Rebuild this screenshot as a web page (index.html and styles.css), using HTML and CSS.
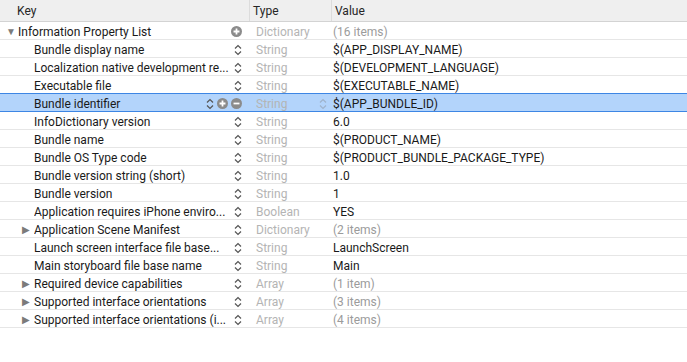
FILE: index.html
```html
<!DOCTYPE html>
<html lang="en">

<head>
    <meta charset="UTF-8">
    <meta name="viewport" content="width=device-width, initial-scale=1.0">
    <title>Info.plist</title>
    <link rel="stylesheet" href="styles.css">
</head>

<body>
    <div class="plist">
        <div class="head">
            <div class="col key-col">Key</div>
            <div class="col type-col">Type</div>
            <div class="col value-col">Value</div>
        </div>

        <div class="row">
            <div class="key root"><span class="tri">&#9660;</span><span class="name">Information Property List</span>
                <span class="ctl"><svg class="circ" viewBox="0 0 10 10"><circle cx="5" cy="5" r="5" /><path d="M5 2.3v5.4M2.3 5h5.4" /></svg></span>
            </div>
            <div class="type">Dictionary</div>
            <div class="value dim">(16 items)</div>
        </div>
        <div class="row">
            <div class="key"><span class="name">Bundle display name</span><span class="ctl"><svg class="chev" viewBox="0 0 8 12"><path d="M1 4.5l3-3 3 3M1 7.5l3 3 3-3" /></svg></span></div>
            <div class="type">String</div>
            <div class="value">$(APP_DISPLAY_NAME)</div>
        </div>
        <div class="row">
            <div class="key"><span class="name">Localization native development re...</span><span class="ctl"><svg class="chev" viewBox="0 0 8 12"><path d="M1 4.5l3-3 3 3M1 7.5l3 3 3-3" /></svg></span></div>
            <div class="type">String</div>
            <div class="value">$(DEVELOPMENT_LANGUAGE)</div>
        </div>
        <div class="row">
            <div class="key"><span class="name">Executable file</span><span class="ctl"><svg class="chev" viewBox="0 0 8 12"><path d="M1 4.5l3-3 3 3M1 7.5l3 3 3-3" /></svg></span></div>
            <div class="type">String</div>
            <div class="value">$(EXECUTABLE_NAME)</div>
        </div>
        <div class="row selected">
            <div class="key"><span class="name">Bundle identifier</span>
                <span class="ctl">
                    <svg class="chev" viewBox="0 0 8 12"><path d="M1 4.5l3-3 3 3M1 7.5l3 3 3-3" /></svg>
                    <svg class="circ" viewBox="0 0 10 10"><circle cx="5" cy="5" r="5" /><path d="M5 2.3v5.4M2.3 5h5.4" /></svg>
                    <svg class="circ" viewBox="0 0 10 10"><circle cx="5" cy="5" r="5" /><path d="M2.3 5h5.4" /></svg>
                </span>
            </div>
            <div class="type"><span class="name">String</span><svg class="chev light" viewBox="0 0 8 12"><path d="M1 4.5l3-3 3 3M1 7.5l3 3 3-3" /></svg></div>
            <div class="value">$(APP_BUNDLE_ID)</div>
        </div>
        <div class="row">
            <div class="key"><span class="name">InfoDictionary version</span><span class="ctl"><svg class="chev" viewBox="0 0 8 12"><path d="M1 4.5l3-3 3 3M1 7.5l3 3 3-3" /></svg></span></div>
            <div class="type">String</div>
            <div class="value">6.0</div>
        </div>
        <div class="row">
            <div class="key"><span class="name">Bundle name</span><span class="ctl"><svg class="chev" viewBox="0 0 8 12"><path d="M1 4.5l3-3 3 3M1 7.5l3 3 3-3" /></svg></span></div>
            <div class="type">String</div>
            <div class="value">$(PRODUCT_NAME)</div>
        </div>
        <div class="row">
            <div class="key"><span class="name">Bundle OS Type code</span><span class="ctl"><svg class="chev" viewBox="0 0 8 12"><path d="M1 4.5l3-3 3 3M1 7.5l3 3 3-3" /></svg></span></div>
            <div class="type">String</div>
            <div class="value">$(PRODUCT_BUNDLE_PACKAGE_TYPE)</div>
        </div>
        <div class="row">
            <div class="key"><span class="name">Bundle version string (short)</span><span class="ctl"><svg class="chev" viewBox="0 0 8 12"><path d="M1 4.5l3-3 3 3M1 7.5l3 3 3-3" /></svg></span></div>
            <div class="type">String</div>
            <div class="value">1.0</div>
        </div>
        <div class="row">
            <div class="key"><span class="name">Bundle version</span><span class="ctl"><svg class="chev" viewBox="0 0 8 12"><path d="M1 4.5l3-3 3 3M1 7.5l3 3 3-3" /></svg></span></div>
            <div class="type">String</div>
            <div class="value">1</div>
        </div>
        <div class="row">
            <div class="key"><span class="name">Application requires iPhone enviro...</span><span class="ctl"><svg class="chev" viewBox="0 0 8 12"><path d="M1 4.5l3-3 3 3M1 7.5l3 3 3-3" /></svg></span></div>
            <div class="type">Boolean</div>
            <div class="value">YES</div>
        </div>
        <div class="row">
            <div class="key child"><span class="tri">&#9654;</span><span class="name">Application Scene Manifest</span><span class="ctl"><svg class="chev" viewBox="0 0 8 12"><path d="M1 4.5l3-3 3 3M1 7.5l3 3 3-3" /></svg></span></div>
            <div class="type">Dictionary</div>
            <div class="value dim">(2 items)</div>
        </div>
        <div class="row">
            <div class="key"><span class="name">Launch screen interface file base...</span><span class="ctl"><svg class="chev" viewBox="0 0 8 12"><path d="M1 4.5l3-3 3 3M1 7.5l3 3 3-3" /></svg></span></div>
            <div class="type">String</div>
            <div class="value">LaunchScreen</div>
        </div>
        <div class="row">
            <div class="key"><span class="name">Main storyboard file base name</span><span class="ctl"><svg class="chev" viewBox="0 0 8 12"><path d="M1 4.5l3-3 3 3M1 7.5l3 3 3-3" /></svg></span></div>
            <div class="type">String</div>
            <div class="value">Main</div>
        </div>
        <div class="row">
            <div class="key child"><span class="tri">&#9654;</span><span class="name">Required device capabilities</span><span class="ctl"><svg class="chev" viewBox="0 0 8 12"><path d="M1 4.5l3-3 3 3M1 7.5l3 3 3-3" /></svg></span></div>
            <div class="type">Array</div>
            <div class="value dim">(1 item)</div>
        </div>
        <div class="row">
            <div class="key child"><span class="tri">&#9654;</span><span class="name">Supported interface orientations</span><span class="ctl"><svg class="chev" viewBox="0 0 8 12"><path d="M1 4.5l3-3 3 3M1 7.5l3 3 3-3" /></svg></span></div>
            <div class="type">Array</div>
            <div class="value dim">(3 items)</div>
        </div>
        <div class="row">
            <div class="key child"><span class="tri">&#9654;</span><span class="name">Supported interface orientations (i...</span><span class="ctl"><svg class="chev" viewBox="0 0 8 12"><path d="M1 4.5l3-3 3 3M1 7.5l3 3 3-3" /></svg></span></div>
            <div class="type">Array</div>
            <div class="value dim">(4 items)</div>
        </div>
    </div>
</body>

</html>
```

FILE: styles.css
```css
body * {
    box-sizing: border-box;
}

body {
    margin: 0;
    background: #fff;
    font-family: Roboto, "Liberation Sans", Arial, sans-serif;
    font-size: 12px;
    color: #1a1a1a;
}

.plist {
    width: 687px;
}

.head,
.row {
    display: grid;
    grid-template-columns: 249px 82px 1fr;
}

.head {
    height: 22px;
    background: #efefef;
    border-bottom: 1px solid #d3d3d3;
}

.col {
    display: flex;
    align-items: center;
    padding-left: 3px;
    padding-top: 1px;
    border-left: 1px solid #dcdcdc;
    color: #262626;
}

.key-col {
    border-left: none;
    padding-left: 17px;
}

.row {
    height: 18px;
    border-bottom: 1px solid #e6e6e6;
}

.row.selected {
    background: #b3d4fb;
    border-top: 1px solid #3d86e4;
    border-bottom: 1px solid #3d86e4;
    margin-top: -1px;
    height: 19px;
}

.key,
.type,
.value {
    display: flex;
    align-items: center;
    padding-top: 2px;
    white-space: nowrap;
    overflow: hidden;
}

.key {
    padding-left: 34px;
    padding-right: 7px;
}

.key.root {
    padding-left: 6px;
}

.key.child {
    padding-left: 22px;
}

.tri {
    width: 12px;
    font-size: 10px;
    color: #7b7b7b;
}

.name {
    flex: 1;
    overflow: hidden;
}

.ctl {
    display: flex;
    align-items: center;
    gap: 3px;
}

.chev {
    width: 8px;
    height: 12px;
    fill: none;
    stroke: #555;
    stroke-width: 1.2;
}

.chev.light {
    stroke: #9fb3cb;
    flex: none;
    margin-right: 4px;
}

.circ {
    width: 11px;
    height: 11px;
}

.circ circle {
    fill: #8b8b8b;
}

.circ path {
    stroke: #fff;
    stroke-width: 1.6;
}

.type {
    padding-left: 7px;
    color: #b4b4b4;
}

.value {
    padding-left: 2px;
    color: #1a1a1a;
}

.value.dim {
    color: #9b9b9b;
}
```
